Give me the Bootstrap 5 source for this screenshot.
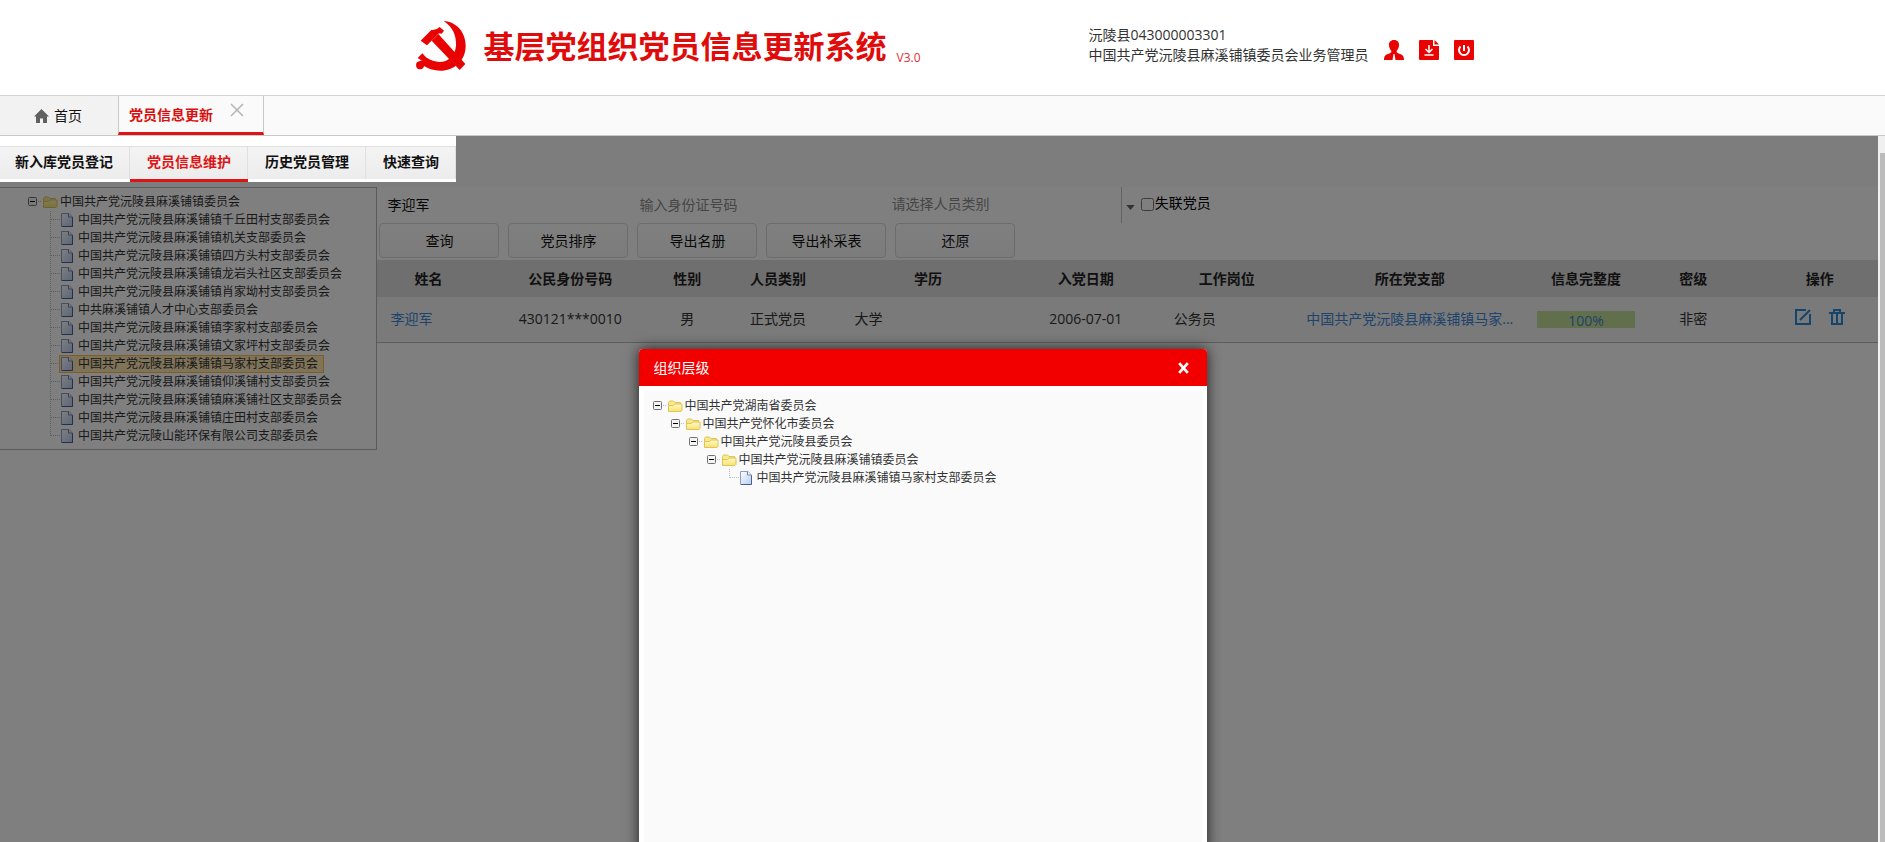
<!DOCTYPE html>
<html lang="zh-CN">
<head>
<meta charset="utf-8">
<meta name="viewport" content="width=device-width, initial-scale=1">
<title>基层党组织党员信息更新系统</title>
<link rel="stylesheet" href="https://cdn.jsdelivr.net/npm/bootstrap@5.3.0/dist/css/bootstrap.min.css">
<style>
  body { font-family: "Open Sans", "Noto Sans CJK SC", sans-serif; font-size: 14px; line-height: 20px; color: #333; background: #fff; }
  a { text-decoration: none; }
  .site-head { height: 96px; border-bottom: 1px solid #d4d4d4; }
  .head-inner { width: 1062px; max-width: 100%; padding-top: 20px; }
  .sys-title { font-size: 31px; line-height: 52px; font-weight: 700; color: #e00b0b; margin-left: 18px; }
  .sys-ver { font-size: 12px; color: #e23030; margin: 28px 0 0 10px; }
  .user-box { margin-top: -7px; }
  .user-icons { gap: 15px; margin: 11px 0 0 15px; }
  .tabs-bar { height: 40px; background: #fafafa; border-bottom: 1px solid #c8c8c8; }
  .tab-home { width: 118px; background: #f2f2f2; color: #111; gap: 5px; padding-left: 34px; }
  .tab-open { border: solid #c8c8c8; border-width: 0 1px; border-bottom: 3px solid #dc1414; color: #d90f0f; padding: 2px 0 0 10px; width: 146px; font-weight: 700; }
  .tab-open button { margin: 0 0 10px 17px; }
  .work { position: relative; overflow: hidden; }
  .page-area { position: relative; background: #fff; }
  .sub-row { background: #fafafa; height: 51px; }
  .shade { position: absolute; inset: 0; background: rgba(0,0,0,.5); z-index: 2; }
  .sub-nav { position: relative; z-index: 3; background: #fff; padding-top: 10px; height: 46px; }
  .sub-nav a { color: #111; font-weight: 700; height: 36px; line-height: 32px; padding: 0 17px; border-bottom: 3px solid #fff; background: linear-gradient(#f4f4f4, #ececec) padding-box; box-shadow: inset -1px 1px #e0e0e0; }
  .sub-nav a:first-child { padding-left: 15px; }
  .sub-nav a.on { color: #e01414; border-color: #dc1414; }
  .side { width: 20.1%; border: 1px solid #b4b4b4; border-left: 0; padding: 5px 0 4px 24px; flex: none; }
  .tree, .tree ul { list-style: none; margin: 0; padding: 0; font-size: 12px; line-height: 18px; }
  .tree ul { padding-left: 18px; }
  .tree .node { display: flex; align-items: center; height: 18px; white-space: nowrap; }
  .tree svg { flex: none; }
  .tree .node a { color: #333; display: flex; align-items: center; gap: 2px; height: 16px; line-height: 16px; }
  .tree .node a.picked { background: #ffe6b0; outline: 1px solid #ffb951; padding-right: 5px; }
  .pane { min-width: 0; }
  .filters { height: 36px; }
  .filters input[type=text], .filters select { border: 0; background: transparent; padding: 0 10px 2px; height: 36px; width: 16.8%; color: #111; }
  .filters input::placeholder { color: #8c8c8c; opacity: 1; }
  .filters select { width: 16%; appearance: none; color: #8c8c8c; border-right: 1px solid #c4c4c4; }
  .filters input[type=checkbox] { width: 13px; height: 13px; margin: 0 1px 2px 6px; }
  .tools { gap: 9px; padding: 0 0 2px 2px; }
  .tools .btn { width: 120px; height: 35px; padding: 0; font-size: 14px; color: #111; border: 1px solid #d8d8d8; border-radius: 4px; background: linear-gradient(#fff, #f8f8f8); }
  .people { table-layout: fixed; width: 100%; border-bottom: 1px solid #bcbcbc; }
  .people th { height: 37px; background: #dedede; text-align: center; font-weight: 700; color: #222; }
  .people td { height: 45px; background: #f4f4f4; text-align: center; white-space: nowrap; }
  .people td a { color: #3d86da; }
  .people .ops { padding-left: 24px; }
  .full-bar { background: #c4de98; height: 17px; width: 98px; line-height: 20px; margin: 0 auto; }
  .dialog-box { position: absolute; z-index: 4; top: 213px; bottom: -10px; left: 34%; width: 568px; background: #fff; border-radius: 4px 4px 0 0; box-shadow: 0 0 14px rgba(0,0,0,.75); }
  .dialog-head { height: 37px; background: #f20000; color: #fff; padding: 0 17px 0 15px; border-radius: 4px 4px 0 0; }
  .dialog-main { margin: 5px 5px 0; padding: 6px 5px; background: #fafafa; }
  .scroll { width: 7px; background: #f0f0f0; padding: 17px 0 0 2px; }
  .scroll div { background: #bcbcbc; }
</style>
</head>
<body class="d-flex flex-column vh-100 overflow-hidden">
<svg width="0" height="0" class="position-absolute" aria-hidden="true">
  <defs>
    <linearGradient id="gf" x2="0" y2="1"><stop stop-color="#fffac8"/><stop offset="1" stop-color="#f8e070"/></linearGradient>
    <linearGradient id="gd" x2="1" y2="1"><stop stop-color="#fff"/><stop offset="1" stop-color="#b7cdf2"/></linearGradient>
  </defs>
  <symbol id="minus" viewBox="0 0 18 18"><rect x="4.500" y="4.500" width="8" height="8" rx="1" fill="#f4f4f4" stroke="#707070"/><path d="M6 8.500h5" stroke="#000"/><path d="M14 8.500h4" stroke="#bbb" stroke-dasharray="1 1"/></symbol>
  <symbol id="joint" viewBox="0 0 18 18"><path d="M8.500 0v18M9 8.500h9" stroke="#bbb" stroke-dasharray="1 1"/></symbol>
  <symbol id="joint-end" viewBox="0 0 18 18"><path d="M8.500 0v9M9 8.500h9" stroke="#bbb" stroke-dasharray="1 1"/></symbol>
  <symbol id="folder" viewBox="0 0 16 16"><path d="M1.500 12.500v-8l1-1.500h4l1.500 1.500h5.500V7" fill="#f9e88c" stroke="#dfc458"/><path d="M1.500 13.500V7.500h5l1.500-1.500h7v6.500l-1 1z" fill="url(#gf)" stroke="#dfc458"/></symbol>
  <symbol id="doc" viewBox="0 0 16 16"><path d="M1.500 1.500h7.500l3.500 3.500v9.500h-11z" fill="url(#gd)" stroke="#8a9cc8"/><path d="M8.500 1.500V5H12" fill="#fff" stroke="#6f82b4"/><path d="M2 14.500h10.500V5.500" fill="none" stroke="#4c5f94"/></symbol>
</svg>

<header class="site-head flex-shrink-0">
  <div class="head-inner mx-auto d-flex justify-content-between">
    <div class="d-flex">
      <svg width="54" height="52" viewBox="12 22 160 156" fill="#e80202" aria-label="党徽" role="img">
        <path d="M37 84 69 52q14 2 25-9l13 11-7 9-8-1-36 36z"/>
        <path d="M70 84 90 64l81 90-17 18z"/>
        <path d="M106 25c42 3 66 37 66 74 0 46-36 75-76 75-18 0-35-5-49-14a12 12 0 1 1-14-14c2-2 5-2 8-2l-13-8 14-14 11 12c40 28 86 12 90-34 2-32-11-59-37-75z"/>
      </svg>
      <div class="sys-title">基层党组织党员信息更新系统</div>
      <div class="sys-ver">V3.0</div>
    </div>
    <div class="d-flex user-box">
      <div class="pt-2 mt-1"><div>沅陵县043000003301</div><div>中国共产党沅陵县麻溪铺镇委员会业务管理员</div></div>
      <div class="d-flex user-icons pt-3">
        <a href="#" aria-label="用户"><svg class="d-block" width="20" height="20" viewBox="0 0 20 20" fill="#e80202"><path d="M10 0C6.500 0 4.700 2.300 5 5.500c.2 2.600 1.300 4.500 2.500 5.500-.3 1.800-1.500 2.300-3.500 3-2.500.8-4 2-4 6h20c0-4-1.500-5.200-4-6-2-.7-3.200-1.200-3.500-3 1.200-1 2.300-2.900 2.500-5.500C15.300 2.300 13.500 0 10 0z"/><path d="m9.500 14-1 6h3l-1-6z" fill="#fff"/></svg></a>
        <a href="#" aria-label="下载"><svg class="d-block" width="20" height="20" viewBox="0 0 20 20"><path d="M1 0h13v6h6v13q0 1-1 1H1q-1 0-1-1V1q0-1 1-1zM15.500 0 20 4.500h-4.500z" fill="#e80202"/><path d="M10 5v7M6.500 9l3.500 3.500L13.500 9M5.500 15h9" fill="none" stroke="#fff" stroke-width="1.500"/></svg></a>
        <a href="#" aria-label="退出"><svg class="d-block" width="20" height="20" viewBox="0 0 20 20"><rect width="20" height="20" rx="1" fill="#e80202"/><path d="M6.500 6.500a5 5 0 1 0 7 0M10 5v6" fill="none" stroke="#fff" stroke-width="2"/></svg></a>
      </div>
    </div>
  </div>
</header>

<nav class="tabs-bar d-flex flex-shrink-0">
  <a href="#" class="tab-home d-flex align-items-center"><svg width="15" height="14" viewBox="0 0 15 14" fill="#606060"><path d="M7.500 0 15 7.500h-2V14H9V9.500H6V14H2V7.500H0z"/></svg>首页</a>
  <div class="tab-open d-flex align-items-center"><a href="#" class="text-reset">党员信息更新</a>
    <button type="button" class="btn p-0 border-0 lh-1" aria-label="关闭标签"><svg class="d-block" width="14" height="14" viewBox="0 0 14 14"><path d="m1 1 12 12M13 1 1 13" stroke="#b4b4b4" stroke-width="1.500"/></svg></button>
  </div>
</nav>

<div class="d-flex flex-grow-1 overflow-hidden">
<main class="work flex-grow-1">
  <div class="page-area h-100">
    <div class="sub-row d-flex align-items-start">
      <nav class="sub-nav d-flex">
        <a href="#">新入库党员登记</a><a href="#" class="on">党员信息维护</a><a href="#">历史党员管理</a><a href="#">快速查询</a>
      </nav>
    </div>
    <div class="d-flex align-items-start">
      <aside class="side">
        <ul class="tree">
          <li><div class="node"><svg width="18" height="18"><use href="#minus"/></svg><a href="#"><svg width="16" height="16"><use href="#folder"/></svg>中国共产党沅陵县麻溪铺镇委员会</a></div>
            <ul id="branches"></ul>
          </li>
        </ul>
      </aside>
      <section class="pane flex-grow-1">
        <form class="filters d-flex align-items-center">
          <input type="text" value="李迎军" aria-label="姓名">
          <input type="text" placeholder="输入身份证号码" aria-label="身份证号码">
          <select aria-label="人员类别"><option>请选择人员类别</option></select>
          <svg class="ms-1 mt-1" width="9" height="5" viewBox="0 0 10 6"><path d="M0 0h10L5 6z" fill="#666"/></svg>
          <input type="checkbox" id="lost"><label for="lost" class="text-black pb-1">失联党员</label>
        </form>
        <div class="tools d-flex">
          <button type="button" class="btn">查询</button><button type="button" class="btn">党员排序</button><button type="button" class="btn">导出名册</button><button type="button" class="btn">导出补采表</button><button type="button" class="btn">还原</button>
        </div>
        <table class="people">
          <colgroup><col style="width:6.8%"><col style="width:12.1%"><col style="width:3.5%"><col style="width:8.6%"><col style="width:11.4%"><col style="width:9.6%"><col style="width:9.2%"><col style="width:15.2%"><col style="width:8.3%"><col style="width:6%"><col></colgroup>
          <thead><tr><th>姓名</th><th>公民身份号码</th><th>性别</th><th>人员类别</th><th>学历</th><th>入党日期</th><th>工作岗位</th><th>所在党支部</th><th>信息完整度</th><th>密级</th><th class="ops">操作</th></tr></thead>
          <tbody><tr>
            <td class="text-start"><a href="#" class="ps-2 ms-1">李迎军</a></td><td>430121***0010</td><td>男</td><td>正式党员</td><td class="text-start ps-2"><span class="ms-1">大学</span></td><td>2006-07-01</td><td class="text-start ps-3">公务员</td>
            <td><a href="#">中国共产党沅陵县麻溪铺镇马家...</a></td>
            <td><div class="full-bar"><a href="#">100%</a></div></td><td>非密</td>
            <td class="ops"><div class="d-flex justify-content-center gap-3 pb-1">
              <a href="#" aria-label="编辑"><svg class="d-block" width="18" height="18" viewBox="0 0 18 18" fill="none" stroke="#2c8ad6" stroke-width="2"><path d="M12 2H2v14h14V6M6 12l10-10"/></svg></a>
              <a href="#" aria-label="删除"><svg class="d-block" width="18" height="18" viewBox="0 0 18 18" fill="none" stroke="#2c8ad6" stroke-width="2"><path d="M1 5h16M6 5V2h6v3M4 5v11h10V5M9 6v9"/></svg></a>
            </div></td>
          </tr></tbody>
        </table>
      </section>
    </div>
    <div class="shade"></div>
  </div>

  <div class="dialog-box" role="dialog" aria-label="组织层级">
    <div class="dialog-head d-flex align-items-center justify-content-between"><span>组织层级</span>
      <button type="button" class="btn p-0 border-0" aria-label="关闭"><svg class="d-block" width="13" height="14" viewBox="0 0 12 13"><path d="m2 2 8 9M10 2l-8 9" stroke="#fff" stroke-width="2.500"/></svg></button>
    </div>
    <div class="dialog-main h-100">
      <ul class="tree">
        <li><div class="node"><svg width="18" height="18"><use href="#minus"/></svg><a href="#"><svg width="16" height="16"><use href="#folder"/></svg>中国共产党湖南省委员会</a></div>
        <ul><li><div class="node"><svg width="18" height="18"><use href="#minus"/></svg><a href="#"><svg width="16" height="16"><use href="#folder"/></svg>中国共产党怀化市委员会</a></div>
        <ul><li><div class="node"><svg width="18" height="18"><use href="#minus"/></svg><a href="#"><svg width="16" height="16"><use href="#folder"/></svg>中国共产党沅陵县委员会</a></div>
        <ul><li><div class="node"><svg width="18" height="18"><use href="#minus"/></svg><a href="#"><svg width="16" height="16"><use href="#folder"/></svg>中国共产党沅陵县麻溪铺镇委员会</a></div>
        <ul><li><div class="node"><svg width="18" height="18"><use href="#joint-end"/></svg><a href="#"><svg width="16" height="16"><use href="#doc"/></svg>中国共产党沅陵县麻溪铺镇马家村支部委员会</a></div></li></ul>
        </li></ul></li></ul></li></ul></li>
      </ul>
    </div>
  </div>
</main>
<div class="scroll flex-shrink-0"><div class="h-100"></div></div>
</div>

<script src="https://cdn.jsdelivr.net/npm/bootstrap@5.3.0/dist/js/bootstrap.bundle.min.js"></script>
<script>
  const town = '中国共产党沅陵县麻溪铺镇';
  const names = [town + '千丘田村', town + '机关', town + '四方头村', town + '龙岩头社区', town + '肖家坳村', '中共麻溪铺镇人才中心', town + '李家村', town + '文家坪村', town + '马家村', town + '仰溪铺村', town + '麻溪铺社区', town + '庄田村', '中国共产党沅陵山能环保有限公司'];
  document.getElementById('branches').innerHTML = names.map((n, i) =>
    `<li><div class="node leaf"><svg width="18" height="18"><use href="#${i === names.length - 1 ? 'joint-end' : 'joint'}"/></svg><a href="#"${n.endsWith('马家村') ? ' class="picked"' : ''}><svg width="16" height="16"><use href="#doc"/></svg>${n}支部委员会</a></div></li>`).join('');
</script>
</body>
</html>
